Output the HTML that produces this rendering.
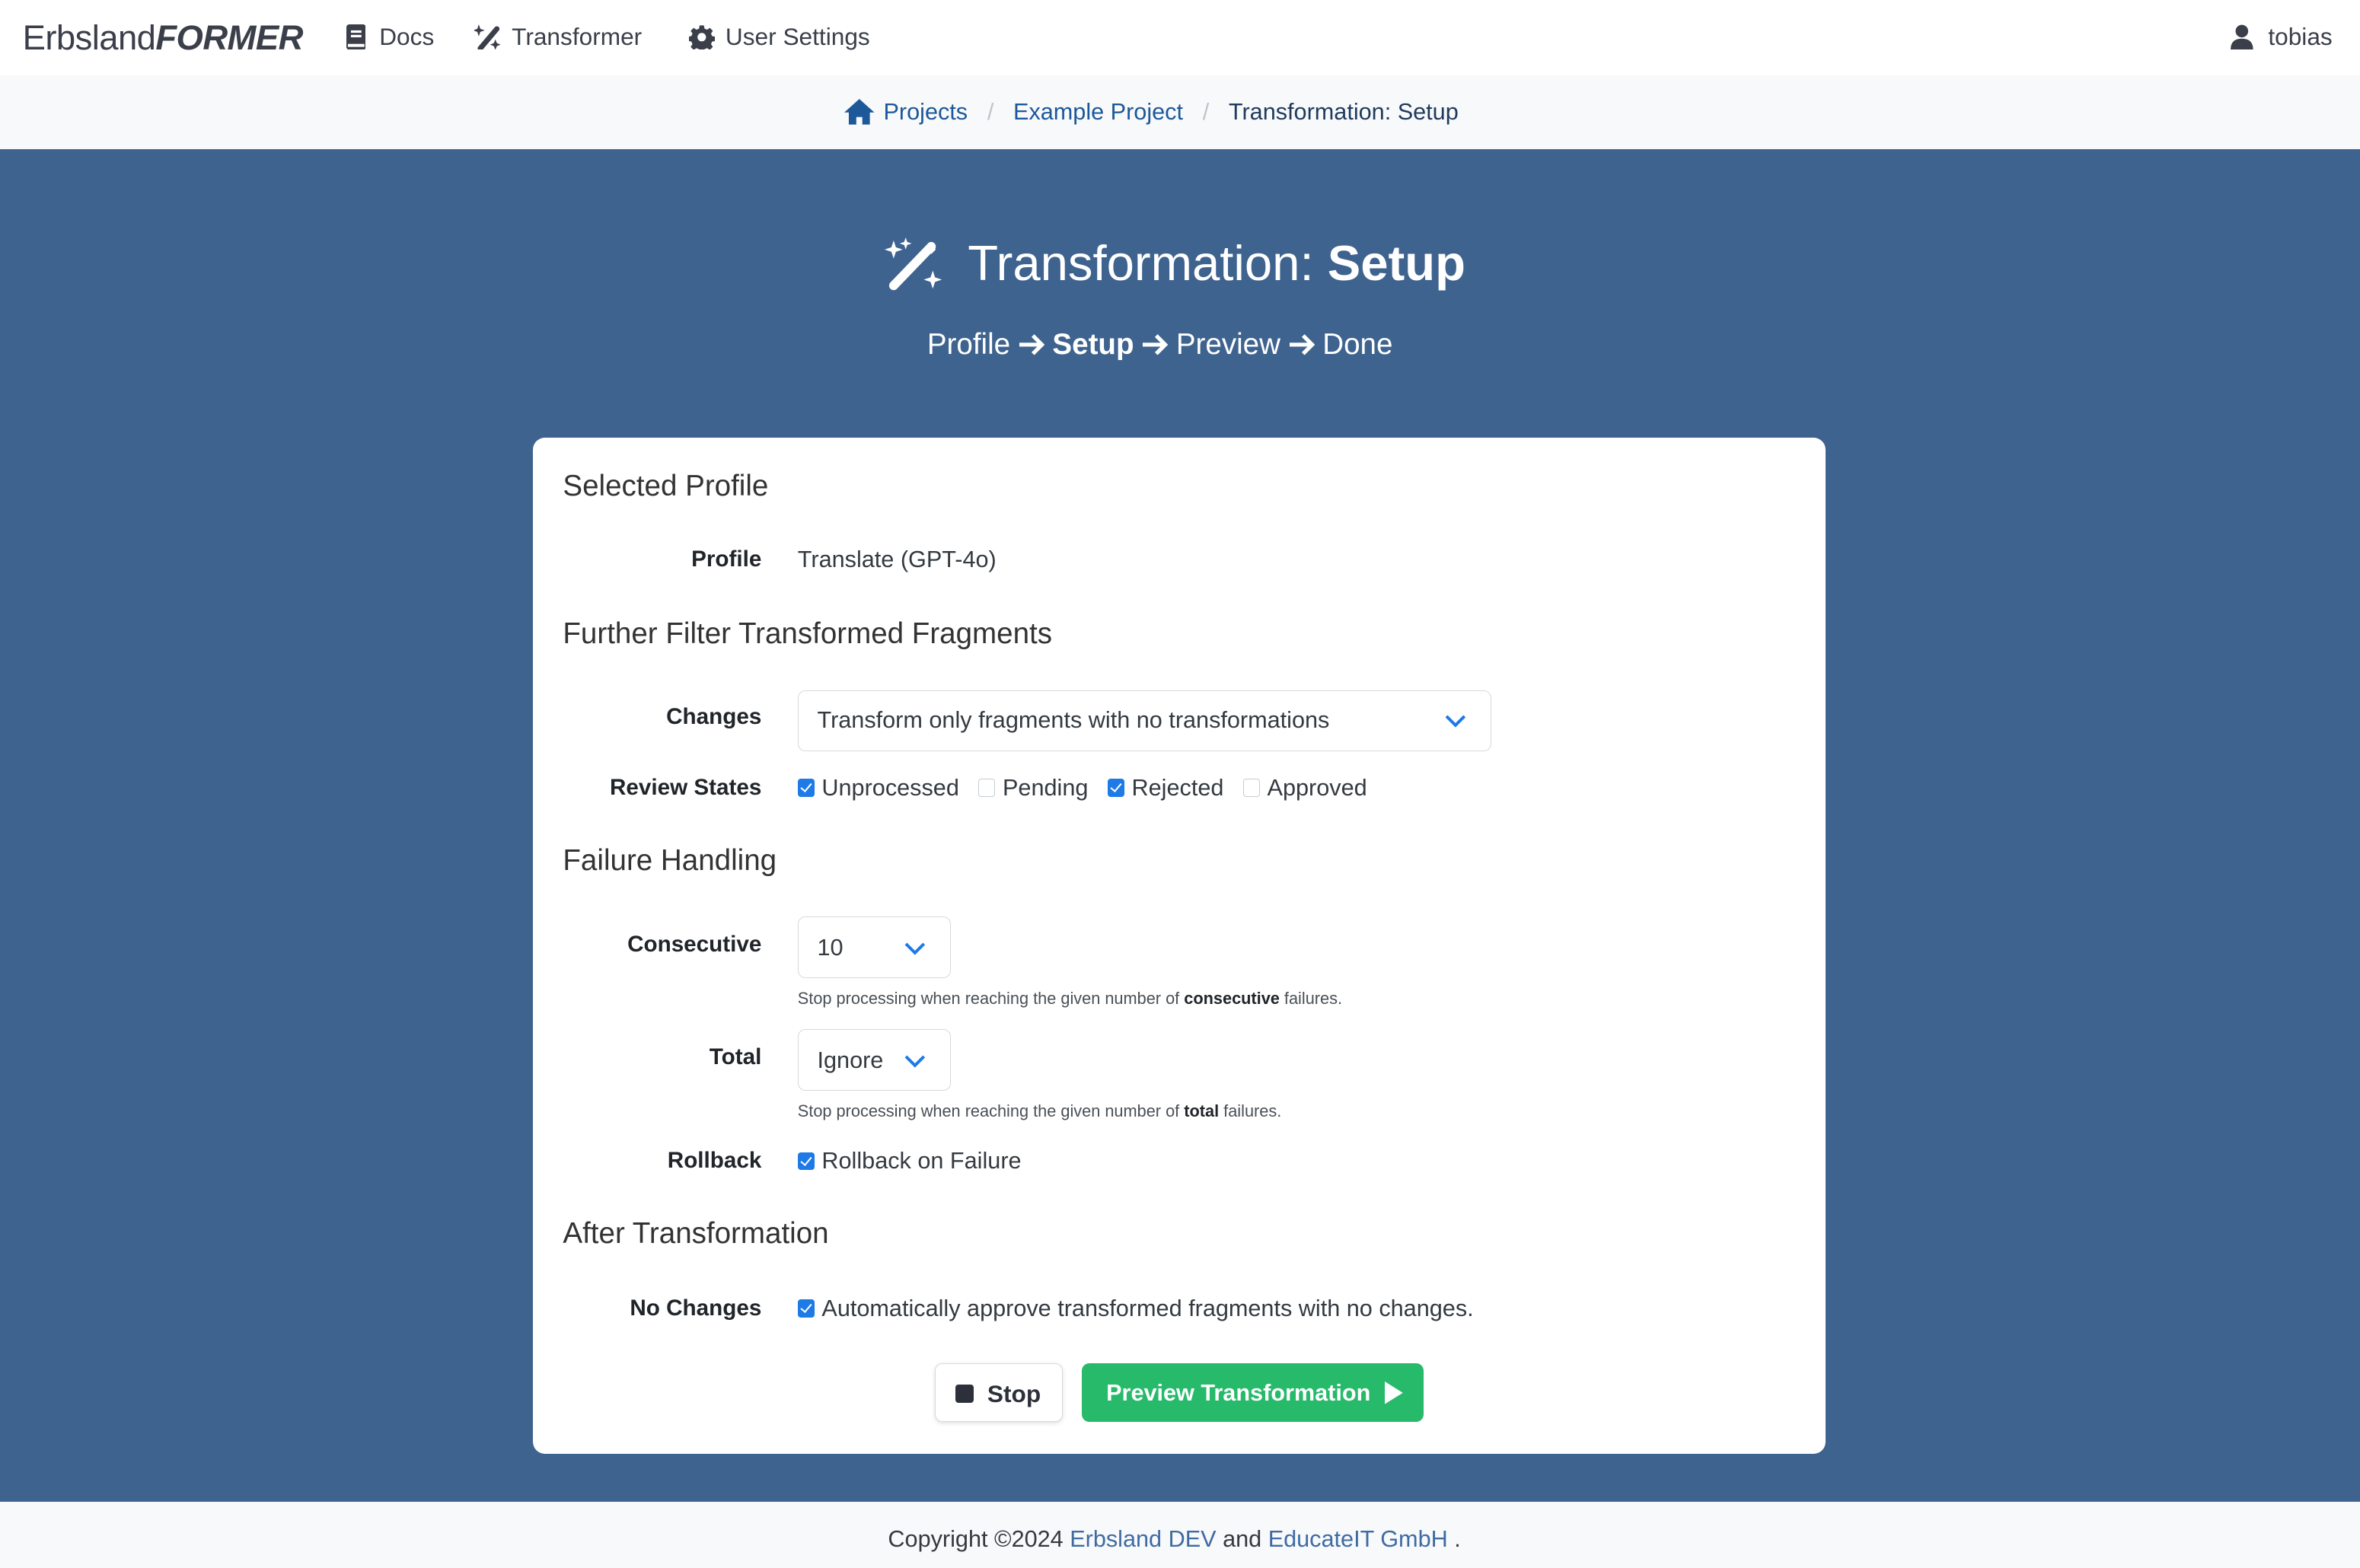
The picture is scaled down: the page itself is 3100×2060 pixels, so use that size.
<!DOCTYPE html>
<html><head><meta charset="utf-8">
<style>
html,body{margin:0;padding:0;width:3100px;height:2060px;overflow:hidden;background:#fff}
#w{position:absolute;left:0;top:0;width:1568px;height:1042px;zoom:1.977;font-family:"Liberation Sans",sans-serif;color:#343a40;overflow:hidden}
.a{position:absolute;white-space:nowrap}
.nav{left:0;top:0;width:1568px;height:50px;background:#fff}
.bc{left:0;top:50px;width:1568px;height:49px;background:#f8f9fb}
.blue{left:0;top:99px;width:1568px;height:899px;background:#3f638f}
.foot{left:0;top:998px;width:1568px;height:44px;background:#f8f9fb}
.card{left:354px;top:291px;width:859px;height:675px;background:#fff;border-radius:8px}
.h{font-size:19.5px;color:#333;left:374px}
.lbl{font-weight:bold;font-size:15px;color:#212529;width:200px;text-align:right;left:306px}
.v{font-size:15.5px;color:#343a40;left:530px}
.sel{position:absolute;border:1px solid #d5d9de;border-radius:5px;background:#fff;box-sizing:border-box}
.cb{display:inline-block;width:11px;height:12px;border-radius:2px;vertical-align:-1px;margin-right:5px;box-sizing:border-box;position:relative}
.on{background:#1e7ae6}
.on::after{content:"";position:absolute;left:3.5px;top:1.5px;width:3px;height:6px;border:solid #fff;border-width:0 1.5px 1.5px 0;transform:rotate(40deg)}
.off{border:1px solid #c8cdd2;background:#fff}
.small{font-size:11px;color:#495057;left:530px}
a{color:#1d5899;text-decoration:none}
.arr{display:inline-block;vertical-align:-2px;margin:0 5px}
</style></head><body><div id="w">
<div class="a nav"></div>
<div class="a" style="left:15px;top:12px;font-size:23px;color:#3a3f4a;letter-spacing:-0.3px">Erbsland<b><i>FORMER</i></b></div>
<svg class="a" style="left:230px;top:16px" width="13" height="17" viewBox="0 0 13 17"><rect x="0" y="0" width="13" height="17" rx="2" fill="#3a3f4a"/><rect x="3" y="4" width="7" height="1.6" fill="#fff"/><rect x="3" y="7" width="7" height="1.6" fill="#fff"/><rect x="1" y="13" width="11" height="2" fill="#fff"/></svg>
<div class="a" style="left:252px;top:15px;font-size:16px;color:#3a3f4a">Docs</div>
<svg class="a" style="left:315px;top:15px" width="18" height="18" viewBox="0 0 18 18"><path d="M4 17 L15 4" stroke="#3a3f4a" stroke-width="3.5" stroke-linecap="round"/><path d="M3 1 L4 4 L7 5 L4 6 L3 9 L2 6 L-1 5 L2 4Z" fill="#3a3f4a"/><path d="M14 11 L15 13.5 L17.5 14.5 L15 15.5 L14 18 L13 15.5 L10.5 14.5 L13 13.5Z" fill="#3a3f4a"/></svg>
<div class="a" style="left:340px;top:15px;font-size:16px;color:#3a3f4a">Transformer</div>
<svg class="a" style="left:458px;top:16px" width="17" height="17" viewBox="0 0 24 24"><path fill="#3a3f4a" d="M10 1h4l.6 3 2.4 1 2.6-1.7 2.8 2.8L20.7 8.7l1 2.3 3 .6v4l-3 .6-1 2.4 1.7 2.6-2.8 2.8-2.6-1.7-2.4 1-.6 3h-4l-.6-3-2.4-1-2.6 1.7-2.8-2.8 1.7-2.6-1-2.4-3-.6v-4l3-.6 1-2.3L1.6 6.1 4.4 3.3 7 5l2.4-1z M12 8a4 4 0 100 8 4 4 0 000-8z"/></svg>
<div class="a" style="left:482px;top:15px;font-size:16px;color:#3a3f4a">User Settings</div>
<svg class="a" style="left:1482px;top:16px" width="15" height="17" viewBox="0 0 15 17"><circle cx="7.5" cy="4.5" r="4.2" fill="#3a3f4a"/><path d="M0 17 Q0 9.5 7.5 9.5 Q15 9.5 15 17Z" fill="#3a3f4a"/></svg>
<div class="a" style="left:1507px;top:15px;font-size:16px;color:#3a3f4a">tobias</div>

<div class="a bc"></div>
<svg class="a" style="left:561px;top:66px" width="20" height="17" viewBox="0 0 20 17"><path d="M10 0 L20 9 L17 9 L17 17 L12 17 L12 12 L8 12 L8 17 L3 17 L3 9 L0 9Z" fill="#1d5899"/></svg>
<div class="a" style="left:587px;top:66px;font-size:15.5px"><a>Projects</a><span style="color:#c0c4c8;margin:0 13px">/</span><a>Example Project</a><span style="color:#c0c4c8;margin:0 13px">/</span><span style="color:#1f3b5c">Transformation: Setup</span></div>

<div class="a blue"></div>
<svg class="a" style="left:588px;top:158px" width="38" height="36" viewBox="0 0 38 36"><path d="M6 32 L31 6" stroke="#fff" stroke-width="6" stroke-linecap="round"/><path d="M30 4 L34 8 L31 11 L27 7Z" fill="#fff"/><path d="M6 2 L7.5 6.5 L12 8 L7.5 9.5 L6 14 L4.5 9.5 L0 8 L4.5 6.5Z" fill="#fff"/><path d="M14 0 L15 3 L18 4 L15 5 L14 8 L13 5 L10 4 L13 3Z" fill="#fff"/><path d="M32 22 L33.5 26.5 L38 28 L33.5 29.5 L32 34 L30.5 29.5 L26 28 L30.5 26.5Z" fill="#fff"/></svg>
<div class="a" style="left:643px;top:156px;font-size:33px;color:#fff">Transformation: <b>Setup</b></div>
<div class="a" style="left:616px;top:218px;font-size:19.5px;color:#fff">Profile<svg class="arr" width="18" height="16" viewBox="0 0 18 16"><path d="M1 8 H16 M10 2 L16 8 L10 14" stroke="#fff" stroke-width="2.6" fill="none"/></svg><b>Setup</b><svg class="arr" width="18" height="16" viewBox="0 0 18 16"><path d="M1 8 H16 M10 2 L16 8 L10 14" stroke="#fff" stroke-width="2.6" fill="none"/></svg>Preview<svg class="arr" width="18" height="16" viewBox="0 0 18 16"><path d="M1 8 H16 M10 2 L16 8 L10 14" stroke="#fff" stroke-width="2.6" fill="none"/></svg>Done</div>

<div class="a card"></div>
<div class="a h" style="top:312px">Selected Profile</div>
<div class="a lbl" style="top:363px">Profile</div>
<div class="a v" style="top:363px">Translate (GPT-4o)</div>
<div class="a h" style="top:410px">Further Filter Transformed Fragments</div>
<div class="a lbl" style="top:468px">Changes</div>
<div class="sel" style="left:530px;top:459px;width:461px;height:40px"></div>
<div class="a v" style="left:543px;top:470px">Transform only fragments with no transformations</div>
<svg class="a" style="left:960px;top:474px" width="14" height="10" viewBox="0 0 14 10"><path d="M1 2 L7 8 L13 2" stroke="#1e7ae6" stroke-width="2" fill="none"/></svg>
<div class="a lbl" style="top:515px">Review States</div>
<div class="a v" style="top:515px"><span class="cb on"></span>Unprocessed &nbsp;&nbsp;<span class="cb off"></span>Pending &nbsp;&nbsp;<span class="cb on"></span>Rejected &nbsp;&nbsp;<span class="cb off"></span>Approved</div>
<div class="a h" style="top:561px">Failure Handling</div>
<div class="a lbl" style="top:619px">Consecutive</div>
<div class="sel" style="left:530px;top:609px;width:102px;height:41px"></div>
<div class="a v" style="left:543px;top:621px">10</div>
<svg class="a" style="left:601px;top:625px" width="14" height="10" viewBox="0 0 14 10"><path d="M1 2 L7 8 L13 2" stroke="#1e7ae6" stroke-width="2" fill="none"/></svg>
<div class="a small" style="top:657px">Stop processing when reaching the given number of <b style="color:#212529">consecutive</b> failures.</div>
<div class="a lbl" style="top:694px">Total</div>
<div class="sel" style="left:530px;top:684px;width:102px;height:41px"></div>
<div class="a v" style="left:543px;top:696px">Ignore</div>
<svg class="a" style="left:601px;top:700px" width="14" height="10" viewBox="0 0 14 10"><path d="M1 2 L7 8 L13 2" stroke="#1e7ae6" stroke-width="2" fill="none"/></svg>
<div class="a small" style="top:732px">Stop processing when reaching the given number of <b style="color:#212529">total</b> failures.</div>
<div class="a lbl" style="top:763px">Rollback</div>
<div class="a v" style="top:763px"><span class="cb on"></span>Rollback on Failure</div>
<div class="a h" style="top:809px">After Transformation</div>
<div class="a lbl" style="top:861px">No Changes</div>
<div class="a v" style="top:861px"><span class="cb on"></span>Automatically approve transformed fragments with no changes.</div>
<div class="a" style="left:621px;top:906px;width:85px;height:39px;border:1px solid #d5d9de;border-radius:5px;box-sizing:border-box;box-shadow:0 1px 3px rgba(0,0,0,.12);background:#fff"></div>
<div class="a" style="left:635px;top:920px;width:12px;height:12px;border-radius:2px;background:#2c303a"></div>
<div class="a" style="left:656px;top:917px;font-size:16px;font-weight:bold;color:#2c303a">Stop</div>
<div class="a" style="left:719px;top:906px;width:227px;height:39px;border-radius:5px;background:#27ba6a"></div>
<div class="a" style="left:735px;top:917px;font-size:15.5px;font-weight:bold;color:#fff">Preview Transformation</div>
<svg class="a" style="left:920px;top:918px" width="12" height="15" viewBox="0 0 12 15"><path d="M0 0 L12 7.5 L0 15Z" fill="#fff"/></svg>

<div class="a foot"></div>
<div class="a" style="left:590px;top:1014px;font-size:15.5px;color:#343a40">Copyright ©2024 <a style="color:#3f6ba3">Erbsland DEV</a> and <a style="color:#3f6ba3">EducateIT GmbH</a> .</div>
</div></body></html>
